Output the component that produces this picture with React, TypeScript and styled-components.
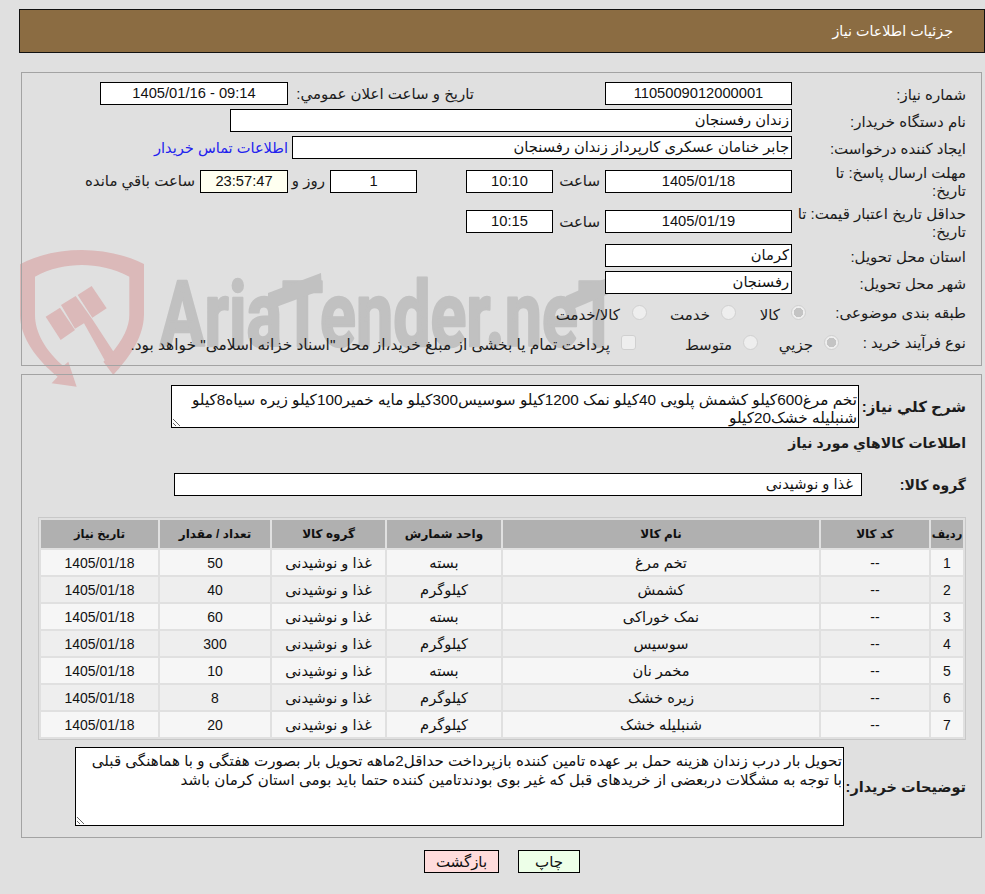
import React from 'react';
import styled, { createGlobalStyle } from 'styled-components';

const GlobalStyle = createGlobalStyle`
  html, body {
    margin: 0;
    padding: 0;
    background: #e0e0e0;
  }
  body {
    font-family: "Liberation Sans", "DejaVu Sans", sans-serif;
    color: #111;
  }
`;

const Page = styled.div`
  position: relative;
  width: 985px;
  height: 894px;
  overflow: hidden;
  direction: rtl;
`;

const Watermark = styled.svg`
  position: absolute;
  left: 0;
  top: 240px;
  z-index: 0;
`;

const Content = styled.div`
  position: relative;
  z-index: 1;
  padding-top: 9px;
`;

const Header = styled.header`
  box-sizing: border-box;
  height: 44px;
  margin: 0 0 19px 19px;
  padding-right: 31px;
  display: flex;
  align-items: center;
  border: 1px solid #111;
  background: #8b6c42;
  color: #fff;
  font-size: 14.3px;
`;

const Panel = styled.section`
  box-sizing: border-box;
  margin: 0 3px 8px 21px;
  padding: ${(p) => p.$pad};
  height: ${(p) => p.$h}px;
  border: 1px solid #a3a3a3;
`;

const Row = styled.div`
  display: flex;
  align-items: center;
  height: ${(p) => p.$h || 27}px;
  margin-top: ${(p) => p.$top || 0}px;
`;

const Label = styled.div`
  flex: none;
  width: ${(p) => p.$w || 174}px;
  font-size: 15px;
  line-height: 18px;
  padding-top: 2px;
  color: #1c1c1c;
`;

const Box = styled.div`
  flex: none;
  box-sizing: border-box;
  width: ${(p) => p.$w}px;
  height: 23px;
  margin-right: ${(p) => p.$start || 0}px;
  border: 1px solid #000;
  background: ${(p) => (p.$timer ? '#fffff0' : '#fff')};
  font-size: 14.7px;
  line-height: 21px;
  padding: 0 ${(p) => p.$inset || 2}px 0 2px;
  text-align: ${(p) => (p.$text ? 'right' : 'center')};
  white-space: nowrap;
  overflow: hidden;
`;

const Caption = styled.span`
  flex: none;
  margin-right: ${(p) => p.$start || 0}px;
  width: ${(p) => (p.$w ? `${p.$w}px` : 'auto')};
  padding-top: ${(p) => p.$drop || 0}px;
  font-size: ${(p) => p.$size || 15}px;
  color: #1c1c1c;
  white-space: nowrap;
`;

const ContactLink = styled.a`
  flex: none;
  margin-right: 4px;
  color: #2222ee;
  font-size: 14.6px;
  text-decoration: none;
`;

const Choice = styled.input`
  appearance: none;
  flex: none;
  box-sizing: border-box;
  width: 15px;
  height: 15px;
  margin: 0;
  border: 1px solid #d0d0d0;
  border-radius: ${(p) => (p.type === 'radio' ? '50%' : '3px')};
  background: #eeeeee;
  &:checked {
    background: radial-gradient(circle, #c4c4c4 0 4.5px, #eeeeee 5px);
  }
`;

const StrongLabel = styled.div`
  flex: none;
  width: ${(p) => (p.$w ? `${p.$w}px` : 'auto')};
  font-size: ${(p) => p.$size || 14}px;
  font-weight: bold;
  color: #1c1c1c;
  white-space: nowrap;
`;

const Notes = styled.textarea`
  flex: none;
  box-sizing: border-box;
  display: block;
  width: ${(p) => p.$w}px;
  height: ${(p) => p.$h}px;
  padding: ${(p) => p.$tp}px 1px 0;
  border: 1px solid #000;
  border-radius: 0;
  outline: none;
  background: #fff;
  color: #111;
  font-family: inherit;
  font-size: ${(p) => p.$size}px;
  line-height: ${(p) => p.$lh}px;
  direction: rtl;
  resize: both;
  overflow: hidden;
`;

const GoodsTable = styled.table`
  border-collapse: separate;
  border-spacing: 2px;
  table-layout: fixed;
  width: 928px;
  margin-top: 6px;
  border: 1px solid #c8c8c8;
  color: #111;
`;

const Th = styled.th`
  box-sizing: border-box;
  width: ${(p) => p.$w}px;
  height: 28px;
  padding: 0;
  background: #b0b0b0;
  font-size: ${(p) => p.$size || 12}px;
  font-weight: bold;
`;

const Td = styled.td`
  box-sizing: border-box;
  height: 25px;
  padding: 0;
  text-align: center;
  font-size: ${(p) => (p.$farsi ? 14.6 : 14)}px;
  background: ${(p) => (p.$odd ? '#f6f6f6' : '#eeeeee')};
`;

const Actions = styled.div`
  display: flex;
  justify-content: center;
  gap: 19px;
  margin-top: 12px;
  padding-left: 19px;
`;

const ActionButton = styled.button`
  box-sizing: border-box;
  width: ${(p) => p.$w}px;
  height: 23px;
  padding: 0;
  border: 1px solid #000;
  border-radius: 0;
  background: ${(p) => p.$bg};
  color: #111;
  font-family: inherit;
  font-size: 15px;
`;

const rows = [
  ['1', 'تخم مرغ', 'بسته', '50'],
  ['2', 'کشمش', 'کیلوگرم', '40'],
  ['3', 'نمک خوراکی', 'بسته', '60'],
  ['4', 'سوسیس', 'کیلوگرم', '300'],
  ['5', 'مخمر نان', 'بسته', '10'],
  ['6', 'زیره خشک', 'کیلوگرم', '8'],
  ['7', 'شنبلیله خشک', 'کیلوگرم', '20'],
];

const summary =
  'تخم مرغ600کیلو کشمش پلویی 40کیلو نمک 1200کیلو سوسیس300کیلو مایه خمیر100کیلو زیره سیاه8کیلو\nشنبلیله خشک20کیلو';
const buyerNotes =
  'تحویل بار درب زندان هزینه حمل بر عهده تامین کننده بازپرداخت حداقل2ماهه تحویل بار بصورت هفتگی و با هماهنگی قبلی\nبا توجه به مشگلات دربعضی از خریدهای قبل که غیر بوی بودندتامین کننده حتما باید بومی استان کرمان باشد';

export default function App() {
  return (
    <Page>
      <GlobalStyle />
      <Watermark width="985" height="170" viewBox="0 0 985 170">
        <g transform="translate(10 0) scale(0.3333)" fill="#dbb9b9">
          <path d="M30,73 C90,42 150,30 216,30 C280,30 350,45 402,72 L402,225 C400,300 350,360 310,405 L280,365 L300,345 C340,300 358,260 358,225 L358,110 C310,85 260,75 216,75 C170,75 120,85 75,110 L75,225 C75,280 110,335 160,378 L175,365 L200,440 L125,430 L143,410 C80,360 30,290 30,225 Z" />
          <path d="M107,230 L150,203 L195,270 L152,300 Z" />
          <path d="M153,195 L197,168 L247,238 L315,342 L285,362 L222,250 L195,266 Z" />
          <path d="M203,165 L245,138 L290,205 L247,233 Z" />
        </g>
        <g fill="#c1c1c1">
          <text x="160" y="106" fontFamily="Roboto, sans-serif" fontWeight="700" fontSize="90" textLength="459" lengthAdjust="spacingAndGlyphs" direction="ltr" stroke="#c1c1c1" strokeWidth="2.5" strokeLinejoin="round">AriaTender.neT</text>
          <path d="M268,53 L321,33 L322,50 L268,70 Z" />
          <path d="M566,56 L618,33 L618,50 L566,72 Z" />
        </g>
      </Watermark>
      <Content>
        <Header>جزئیات اطلاعات نیاز</Header>

        <Panel $h={294} $pad="7px 15px 0 0">
          <Row>
            <Label>شماره نیاز:</Label>
            <Box $w={187}>1105009012000001</Box>
            <Caption $start={131} $w={181}>تاریخ و ساعت اعلان عمومي:</Caption>
            <Box $w={188} $start={5}>09:14 - 1405/01/16</Box>
          </Row>
          <Row>
            <Label>نام دستگاه خریدار:</Label>
            <Box $w={562} $text>زندان رفسنجان</Box>
          </Row>
          <Row>
            <Label>ایجاد کننده درخواست:</Label>
            <Box $w={500} $text>جابر خنامان عسکری کارپرداز زندان رفسنجان</Box>
            <ContactLink href="#">اطلاعات تماس خریدار</ContactLink>
          </Row>
          <Row $h={40}>
            <Label>مهلت ارسال پاسخ: تا<br />تاریخ:</Label>
            <Box $w={187}>1405/01/18</Box>
            <Caption $start={5} $w={47}>ساعت</Caption>
            <Box $w={87}>10:10</Box>
            <Box $w={87} $start={49}>1</Box>
            <Caption $start={5} $w={37}>روز و</Caption>
            <Box $w={88} $timer>23:57:47</Box>
            <Caption $start={5}>ساعت باقي مانده</Caption>
          </Row>
          <Row $h={41}>
            <Label>حداقل تاریخ اعتبار قیمت: تا<br />تاریخ:</Label>
            <Box $w={187}>1405/01/19</Box>
            <Caption $start={5} $w={47}>ساعت</Caption>
            <Box $w={87}>10:15</Box>
          </Row>
          <Row>
            <Label>استان محل تحویل:</Label>
            <Box $w={187} $text>کرمان</Box>
          </Row>
          <Row>
            <Label>شهر محل تحویل:</Label>
            <Box $w={187} $text>رفسنجان</Box>
          </Row>
          <Row $h={32}>
            <Label $w={160}>طبقه بندی موضوعی:</Label>
            <Choice type="radio" name="kind" disabled defaultChecked />
            <Caption $start={11} $w={44.5} $drop={6}>کالا</Caption>
            <Choice type="radio" name="kind" disabled />
            <Caption $start={10.5} $w={63.5} $drop={6}>خدمت</Caption>
            <Choice type="radio" name="kind" disabled />
            <Caption $start={11.5} $drop={6}>کالا/خدمت</Caption>
          </Row>
          <Row $h={28}>
            <Label $w={127.5}>نوع فرآیند خرید :</Label>
            <Choice type="radio" name="process" disabled defaultChecked />
            <Caption $start={10.5} $w={55.5} $drop={6}>جزيي</Caption>
            <Choice type="radio" name="process" disabled />
            <Caption $start={10.5} $w={96.5} $drop={6}>متوسط</Caption>
            <Choice type="checkbox" disabled />
            <Caption $start={10.5} $size={15.4} $drop={6}>پرداخت تمام یا بخشی از مبلغ خرید،از محل "اسناد خزانه اسلامی" خواهد بود.</Caption>
          </Row>
        </Panel>

        <Panel $h={464} $pad="10px 15px 0 0">
          <Row $h={43}>
            <StrongLabel $w={107} $size={15}>شرح کلي نیاز:</StrongLabel>
            <Notes readOnly $w={688} $h={43} $lh={17.5} $tp={5} $size={15.3} value={summary} />
          </Row>
          <Row $h={30}>
            <StrongLabel>اطلاعات کالاهاي مورد نیاز</StrongLabel>
          </Row>
          <Row $h={53}>
            <StrongLabel $w={104}>گروه کالا:</StrongLabel>
            <Box $w={688} $text $inset={8}>غذا و نوشیدنی</Box>
          </Row>
          <GoodsTable>
            <thead>
              <tr>
                <Th $w={32} $size={11.5}>ردیف</Th>
                <Th $w={108}>کد کالا</Th>
                <Th $w={316}>نام کالا</Th>
                <Th $w={114}>واحد شمارش</Th>
                <Th $w={113}>گروه کالا</Th>
                <Th $w={110}>تعداد / مقدار</Th>
                <Th $w={117} $size={11.5}>تاریخ نیاز</Th>
              </tr>
            </thead>
            <tbody>
              {rows.map(([n, name, unit, qty], i) => (
                <tr key={n}>
                  <Td $odd={i % 2 === 0}>{n}</Td>
                  <Td $odd={i % 2 === 0}>--</Td>
                  <Td $odd={i % 2 === 0} $farsi>{name}</Td>
                  <Td $odd={i % 2 === 0} $farsi>{unit}</Td>
                  <Td $odd={i % 2 === 0} $farsi>غذا و نوشیدنی</Td>
                  <Td $odd={i % 2 === 0}>{qty}</Td>
                  <Td $odd={i % 2 === 0}>1405/01/18</Td>
                </tr>
              ))}
            </tbody>
          </GoodsTable>
          <Row $h={79} $top={7}>
            <StrongLabel $w={122} $size={14.5}>توضیحات خریدار:</StrongLabel>
            <Notes readOnly $w={769} $h={79} $lh={19} $tp={3} $size={15.1} value={buyerNotes} />
          </Row>
        </Panel>

        <Actions>
          <ActionButton $w={62} $bg="#edffe8">چاپ</ActionButton>
          <ActionButton $w={75} $bg="#ffdcdc">بازگشت</ActionButton>
        </Actions>
      </Content>
    </Page>
  );
}
